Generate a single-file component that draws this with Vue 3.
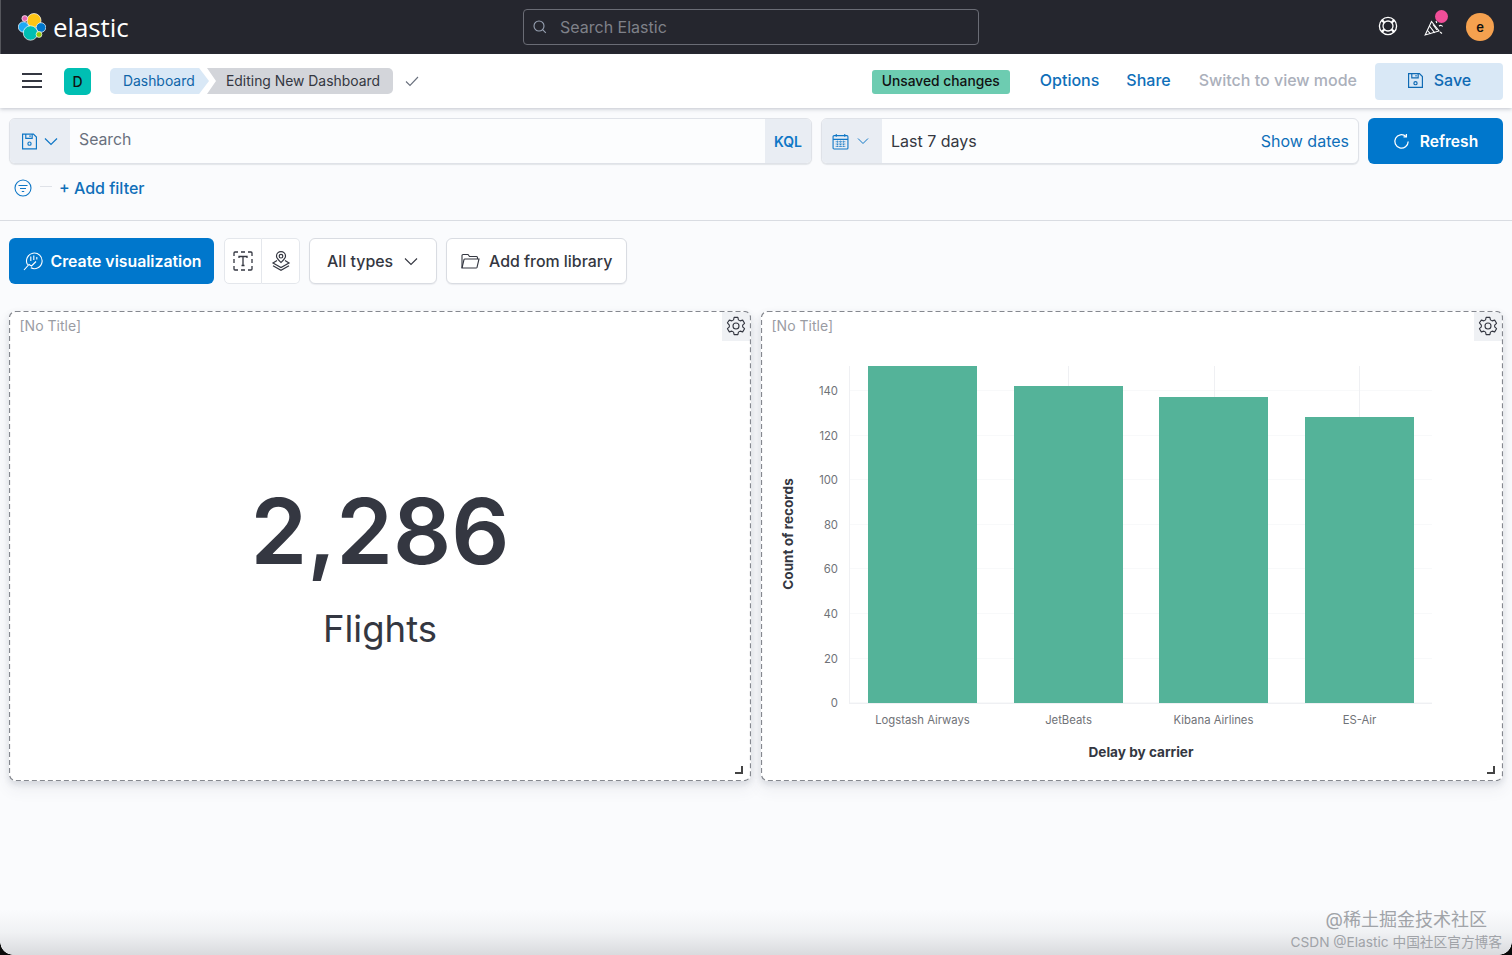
<script setup>
const bars = [
  { x: 868, y: 366, label: 'Logstash Airways' },
  { x: 1014, y: 386, label: 'JetBeats' },
  { x: 1159, y: 397, label: 'Kibana Airlines' },
  { x: 1305, y: 417, label: 'ES-Air' }
]
const ticks = [
  { v: 140, y: 390 }, { v: 120, y: 435 }, { v: 100, y: 479 }, { v: 80, y: 524 },
  { v: 60, y: 568 }, { v: 40, y: 613 }, { v: 20, y: 658 }, { v: 0, y: 702 }
]
</script>

<template>
  <div class="page">
    <header class="topbar">
      <div class="brand">
        <svg width="28" height="28" viewBox="0 0 28 28" stroke="#fff" stroke-width=".7">
          <circle cx="16" cy="7.500" r="7" fill="#fec514"/>
          <circle cx="6.800" cy="5.500" r="2.900" fill="#e66ab0"/>
          <circle cx="5.500" cy="14" r="5.200" fill="#1ba9f5"/>
          <circle cx="23" cy="14.500" r="4.800" fill="#0077cc"/>
          <circle cx="12.500" cy="20" r="7.200" fill="#00bfb3"/>
          <circle cx="21" cy="21.500" r="2.900" fill="#93c90e"/>
        </svg>
        <span class="wordmark">elastic</span>
      </div>
      <div class="global-search">
        <svg width="16" height="16" viewBox="0 0 16 16" fill="none" stroke="#98a2b3" stroke-width="1.100"><circle cx="7" cy="7" r="5"/><path d="M10.600 10.600l3.200 3.200"/></svg>
        <span>Search Elastic</span>
      </div>
      <div class="top-right">
        <svg class="help" width="20" height="20" viewBox="0 0 20 20" fill="none" stroke="#fff" stroke-width="1.300"><circle cx="10" cy="10" r="8.600"/><circle cx="10" cy="10" r="5"/><path d="M6.200 6.400L3.900 4.100M13.800 6.400l2.300-2.300M6.200 13.600l-2.300 2.300M13.800 13.600l2.300 2.300" stroke-width="2.200"/></svg>
        <div class="news">
          <svg width="20" height="20" viewBox="0 0 20 20" fill="none" stroke="#fff" stroke-width="1.100"><path d="M7.500 4.500L1.200 18 15 14z"/><path d="M5.500 9l5.200 6.800M3.500 13.500l3 3.300M9 7.500l4 5.500M12 4l.8 2M15 9c1.500-1 3-.6 3.600.5M16 15l2 1.500"/></svg>
          <span class="news-dot"></span>
        </div>
        <div class="avatar">e</div>
      </div>
    </header>

    <nav class="appbar">
      <button class="burger" aria-label="menu"><i></i><i></i><i></i></button>
      <div class="space-badge">D</div>
      <div class="crumbs">
        <span class="crumb-a">Dashboard</span>
        <span class="crumb-b">Editing New Dashboard</span>
      </div>
      <svg class="crumb-check" width="16" height="16" viewBox="0 0 16 16" fill="none" stroke="#69707d" stroke-width="1.100"><path d="M2 8.500l4 4 8-8.500"/></svg>
      <div class="grow"></div>
      <span class="unsaved">Unsaved changes</span>
      <a class="link options">Options</a>
      <a class="link share">Share</a>
      <a class="link muted">Switch to view mode</a>
      <button class="save">
        <svg width="17" height="17" viewBox="0 0 16 16" fill="none" stroke="#0f6ab4" stroke-width="1.100"><path d="M1.500 1.500h10.200l2.800 2.800v10.200h-13z"/><path d="M4.500 1.500v4h6v-4M8.500 2.800v1.500"/><circle cx="8" cy="10.500" r="1.500"/></svg>
        <span>Save</span>
      </button>
    </nav>

    <section class="query">
      <div class="query-row">
        <div class="search-group">
          <div class="prepend save-prepend">
            <svg width="17" height="17" viewBox="0 0 16 16" fill="none" stroke="#0f77c6" stroke-width="1.100"><path d="M1.500 1h10.200l2.800 2.800V15h-13z" /><path d="M4.500 1v4h6V1M8.500 2.200v1.500"/><circle cx="8" cy="10" r="1.500"/></svg>
            <svg width="14" height="14" viewBox="0 0 14 14" fill="none" stroke="#0f77c6" stroke-width="1.200"><path d="M1 4.500l6 6 6-6"/></svg>
          </div>
          <div class="search-input">Search</div>
          <div class="kql">KQL</div>
        </div>
        <div class="date-group">
          <div class="prepend date-prepend">
            <svg width="17" height="17" viewBox="0 0 16 16" fill="none" stroke="#0f77c6" stroke-width="1.050"><rect x="1" y="2.500" width="14" height="12.500" rx="1"/><path d="M1 6h14M4 1v2.500M12 1v2.500"/><path d="M3.500 8.200h9M3.500 10.400h9M3.500 12.600h9M5.200 7.200v6.400M8 7.200v6.400M10.800 7.200v6.400" stroke-width=".8" stroke-dasharray="1 .6"/></svg>
            <svg width="12" height="12" viewBox="0 0 12 12" fill="none" stroke="#0f77c6" stroke-width="1"><path d="M1 3.500l5 5 5-5"/></svg>
          </div>
          <div class="date-value">
            <span>Last 7 days</span>
            <a class="show-dates">Show dates</a>
          </div>
        </div>
        <button class="refresh">
          <svg width="17" height="17" viewBox="0 0 16 16" fill="none" stroke="#fff" stroke-width="1.200"><path d="M12.200 3.200A6.300 6.300 0 1 0 14.300 8"/><path d="M12.600.9v2.700H9.900"/></svg>
          <span>Refresh</span>
        </button>
      </div>
      <div class="filter-row">
        <svg width="18" height="18" viewBox="0 0 18 18" fill="none" stroke="#0f77c6" stroke-width="1.100"><circle cx="9" cy="9" r="8"/><path d="M4.500 6.500h9M6 9.500h6M7.800 12.500h2.400"/></svg>
        <span class="dash"></span>
        <a class="add-filter">+ Add filter</a>
      </div>
    </section>

    <section class="toolbar">
      <button class="create">
        <svg width="20" height="20" viewBox="0 0 20 20" fill="none" stroke="#fff" stroke-width="1.100"><path d="M4.600 13.800A7.800 7.800 0 1 1 7.800 16.800"/><path d="M1 19l5-5.500 2.500 1.500 4.500-4.500"/><path d="M7.800 5.500v4.500M10.800 4.500v4.500M13.800 6v2.500"/></svg>
        <span>Create visualization</span>
      </button>
      <div class="icon-group">
        <button>
          <svg width="20" height="20" viewBox="0 0 20 20" fill="none" stroke="#343741" stroke-width="1.300"><path d="M1 5V2a1 1 0 0 1 1-1h3M8 1h4M15 1h3a1 1 0 0 1 1 1v3M19 8v4M19 15v3a1 1 0 0 1-1 1h-3M12 19H8M5 19H2a1 1 0 0 1-1-1v-3M1 12V8"/><path d="M6 7V5.500h8V7M10 5.500v9M8.500 14.500h3"/></svg>
        </button>
        <button>
          <svg width="20" height="20" viewBox="0 0 20 20" fill="none" stroke="#343741" stroke-width="1.200"><path d="M10 11.500C7.500 9 5.500 7.200 5.500 5.200a4.500 4.500 0 0 1 9 0c0 2-2 3.800-4.500 6.300z"/><circle cx="10" cy="5.200" r="1.800"/><path d="M6 9.500l-4 2.500 8 4.500 8-4.500-4-2.500M2 14.800l8 4.500 8-4.500"/></svg>
        </button>
      </div>
      <button class="plain all-types">
        <span>All types</span>
        <svg width="14" height="14" viewBox="0 0 14 14" fill="none" stroke="#343741" stroke-width="1.100"><path d="M1 4.500l6 6 6-6"/></svg>
      </button>
      <button class="plain library">
        <svg width="19" height="17" viewBox="0 0 19 17" fill="none" stroke="#343741" stroke-width="1.100"><path d="M1 15V2.500a1 1 0 0 1 1-1h5l1.500 2h7a1 1 0 0 1 1 1V6"/><path d="M1 15l2-8.500a1 1 0 0 1 1-.5h14l-2 8.500a1 1 0 0 1-1 .5z"/></svg>
        <span>Add from library</span>
      </button>
    </section>

    <main class="panels">
      <article class="panel">
        <svg class="dashes" width="742" height="470"><rect x=".5" y=".5" width="741" height="469" rx="6" /></svg>
        <div class="panel-title">[No Title]</div>
        <div class="gear">
          <svg width="20" height="20" viewBox="0 0 18 18" fill="none" stroke="#343741" stroke-width="1"><path d="M7.300 1.200h3.400l.5 2.300 1.500.9 2.300-.7 1.700 2.900-1.700 1.600v1.600l1.700 1.600-1.700 2.900-2.300-.7-1.500.9-.5 2.300H7.300l-.5-2.300-1.500-.9-2.300.7-1.700-2.900L3 9.800V8.200L1.300 6.100 3 3.700l2.300.7 1.500-.9z" stroke-linejoin="round"/><circle cx="9" cy="9" r="2.700"/></svg>
        </div>
        <div class="metric">
          <div class="metric-value">2,286</div>
          <div class="metric-label">Flights</div>
        </div>
        <span class="resize"></span>
      </article>

      <article class="panel">
        <svg class="dashes" width="742" height="470"><rect x=".5" y=".5" width="741" height="469" rx="6" /></svg>
        <div class="panel-title">[No Title]</div>
        <div class="gear">
          <svg width="20" height="20" viewBox="0 0 18 18" fill="none" stroke="#343741" stroke-width="1"><path d="M7.300 1.200h3.400l.5 2.300 1.500.9 2.300-.7 1.700 2.900-1.700 1.600v1.600l1.700 1.600-1.700 2.900-2.300-.7-1.500.9-.5 2.300H7.300l-.5-2.300-1.500-.9-2.300.7-1.700-2.900L3 9.800V8.200L1.300 6.100 3 3.700l2.300.7 1.500-.9z" stroke-linejoin="round"/><circle cx="9" cy="9" r="2.700"/></svg>
        </div>
        <svg class="chart" viewBox="761 311 742 470" width="742" height="470">
          <g stroke="#f8f9fa" stroke-width="1">
            <line v-for="t in ticks" :key="t.v" x1="850" x2="1432" :y1="t.y + 0.5" :y2="t.y + 0.5" />
            <g stroke="#eff0f3">
              <line x1="1068.500" x2="1068.500" y1="366" y2="703" />
              <line x1="1214.500" x2="1214.500" y1="366" y2="703" />
              <line x1="1359.500" x2="1359.500" y1="366" y2="703" />
              <line x1="849.500" x2="849.500" y1="366" y2="703" />
              <line x1="849" x2="1432" y1="703.500" y2="703.500" />
            </g>
          </g>
          <rect v-for="b in bars" :key="b.x" :x="b.x" :y="b.y" width="109" :height="703 - b.y" fill="#54b399" />
          <text v-for="t in ticks" :key="'t' + t.v" x="838" :y="t.y + 4.500" text-anchor="end" class="tick">{{ t.v }}</text>
          <text v-for="b in bars" :key="'l' + b.x" :x="b.x + 54.500" y="723.500" text-anchor="middle" class="tick">{{ b.label }}</text>
          <text x="1141" y="757" text-anchor="middle" class="axis">Delay by carrier</text>
          <text transform="translate(793 534) rotate(-90)" text-anchor="middle" class="axis">Count of records</text>
        </svg>
        <span class="resize"></span>
      </article>
    </main>

    <div class="bottom-fade"></div>
    <div class="watermark">
      <div class="wm-a">@稀土掘金技术社区</div>
      <div class="wm-b">CSDN @Elastic 中国社区官方博客</div>
    </div>
    <div class="corner corner-r"></div>
    <div class="corner corner-l"></div>
  </div>
</template>

<style>
html, body { margin: 0; background: #fafbfd; }
</style>

<style scoped>
.page {
  position: relative;
  width: 1512px;
  height: 955px;
  overflow: hidden;
  background: #fafbfd;
  font-family: Inter, "Noto Sans CJK SC", sans-serif;
  color: #343741;
}
button { font-family: inherit; cursor: pointer; }
a { cursor: pointer; }

.topbar {
  height: 54px;
  box-sizing: border-box;
  background: #25262e;
  display: flex;
  align-items: center;
  padding: 0 18px;
  position: relative;
  border-left: 1px solid #55565c;
}
.brand { display: flex; align-items: center; gap: 8px; width: 505px; margin-left: -1px; }
.wordmark { color: #fff; font: 400 26px "Open Sans", sans-serif; line-height: 54px; letter-spacing: -0.1px; margin-left: -1px; }
.global-search {
  width: 456px;
  height: 36px;
  box-sizing: border-box;
  border: 1px solid #6a6c75;
  border-radius: 4px;
  display: flex;
  align-items: center;
  gap: 12px;
  padding-left: 8px;
  color: #7f8189;
  font-size: 16px;
}
.top-right { margin-left: auto; display: flex; align-items: center; }
.help { margin-right: 26px; margin-top: -2px; }
.news { position: relative; width: 20px; height: 20px; margin-right: 22px; margin-top: -1px; }
.news-dot { position: absolute; top: -7px; left: 11px; width: 13px; height: 13px; border-radius: 50%; background: #f04e98; }
.avatar {
  width: 28px; height: 28px; border-radius: 50%;
  background: #f5a14f; color: #111;
  display: flex; align-items: center; justify-content: center;
  font-size: 13px; font-weight: 600;
}

.appbar {
  height: 54px;
  background: #fff;
  display: flex;
  align-items: center;
  padding-left: 22px;
  padding-right: 9px;
  box-shadow: 0 1px 4px rgba(60, 70, 90, 0.3);
  position: relative;
}
.burger {
  width: 20px; height: 15px; padding: 0; border: 0; background: none;
  display: flex; flex-direction: column; justify-content: space-between;
  margin-top: -1px;
}
.burger i { display: block; height: 2px; background: #343741; }
.space-badge {
  width: 27px; height: 27px; margin-left: 22px; border-radius: 5px;
  background: #00bfb3; color: #111;
  display: flex; align-items: center; justify-content: center;
  font-size: 14px; font-weight: 500;
}
.crumbs { display: flex; height: 26px; margin-left: 19px; font-size: 13.900px; line-height: 26px; }
.crumb-a {
  width: 99px; padding-left: 13px; box-sizing: border-box;
  background: #d9e8f6; color: #0f65a8;
  border-radius: 5px 0 0 5px;
  clip-path: polygon(0 0, 90% 0, 100% 50%, 90% 100%, 0 100%);
}
.crumb-b {
  width: 186px; margin-left: -2px; padding-left: 19px; box-sizing: border-box;
  background: #d3d5da; color: #343741;
  border-radius: 0 5px 5px 0;
  clip-path: polygon(0 0, 100% 0, 100% 100%, 0 100%, 9px 50%);
}
.crumb-check { margin-left: 11px; }
.grow { flex: 1; }
.unsaved {
  background: #6dccb1; color: #111;
  width: 138px; height: 24px; line-height: 22px; text-align: center;
  border-radius: 3px; font-size: 13.800px; font-weight: 500;
  margin: 2px 30px 0 0;
}
.link { font-size: 16px; font-weight: 500; color: #0f6fb9; margin-bottom: 2px; }
.options { margin-right: 27px; }
.share { margin-right: 28px; }
.muted { color: #abb0bb; margin-right: 18px; }
.save {
  width: 128px; height: 37px;
  background: #d9e8f6; color: #0f6ab4;
  border: 0; border-radius: 4px;
  display: flex; align-items: center; justify-content: center; gap: 10px;
  font-size: 16px; font-weight: 500;
  padding: 0 0 2px;
}

.query { height: 113px; box-sizing: border-box; padding: 10px 9px 0; border-bottom: 1px solid #d9dce2; }
.query-row { display: flex; gap: 9px; height: 46px; }
.search-group, .date-group {
  display: flex; height: 46px; box-sizing: border-box;
  border: 1px solid #dfe2e8; border-radius: 6px; overflow: hidden;
  background: #fcfdfe;
  box-shadow: 0 1px 1px rgba(60, 70, 90, 0.12);
}
.search-group { width: 803px; }
.date-group { width: 538px; }
.prepend { background: #e9edf3; display: flex; align-items: center; }
.save-prepend { width: 60px; padding-left: 11px; gap: 6px; box-sizing: border-box; }
.date-prepend { width: 60px; padding-left: 10px; gap: 8px; box-sizing: border-box; }
.search-input { flex: 1; color: #69707d; font-size: 15.800px; line-height: 42px; padding-left: 9px; }
.kql {
  width: 46px; background: #e9edf3; color: #0f77c6;
  display: flex; align-items: center; justify-content: center;
  font-size: 14px; font-weight: 600;
}
.date-value { flex: 1; display: flex; align-items: center; justify-content: space-between; padding: 0 9px 0 9px; font-size: 16px; }
.show-dates { color: #0f6fb9; }
.refresh {
  flex: 1; height: 46px; border: 0; border-radius: 6px;
  background: #0077cc; color: #fff;
  display: flex; align-items: center; justify-content: center; gap: 10px;
  font-size: 15.600px; font-weight: 600;
}
.filter-row { display: flex; align-items: center; height: 20px; margin-top: 14px; padding-left: 5px; }
.dash { width: 12px; height: 1px; background: #dfe2e8; margin: 0 7px 4px 8px; }
.add-filter { color: #0f6fb9; font-size: 16px; font-weight: 500; }

.toolbar { display: flex; align-items: center; height: 46px; margin-top: 17px; padding-left: 9px; }
.create {
  width: 205px; height: 46px; border: 0; border-radius: 6px;
  background: #0077cc; color: #fff;
  display: flex; align-items: center; justify-content: center; gap: 8px;
  font-size: 15.800px; font-weight: 600;
  margin-right: 10px;
  padding: 0 0 0 1px;
}
.icon-group { display: flex; height: 46px; margin-right: 9px; }
.icon-group button {
  width: 38px; height: 46px; padding: 0; background: #fff;
  border: 1px solid #e4e7ec;
  display: flex; align-items: center; justify-content: center;
}
.icon-group button:first-child { border-radius: 5px 0 0 5px; }
.icon-group button:last-child { border-radius: 0 5px 5px 0; border-left: 0; }
.plain {
  height: 46px; box-sizing: border-box; background: #fff;
  border: 1px solid #d9dce2; border-radius: 6px; color: #343741;
  display: flex; align-items: center;
  font-size: 15.900px; font-weight: 500;
  box-shadow: 0 1px 1px rgba(60, 70, 90, 0.08);
}
.all-types { width: 128px; gap: 11px; padding: 0 0 0 17px; margin-right: 9px; }
.library { width: 181px; gap: 9px; padding: 0 0 0 14px; }

.panels { display: flex; gap: 10px; margin-top: 27px; padding: 0 9px; }
.panel {
  position: relative;
  flex: 1;
  height: 470px;
  box-sizing: border-box;
  background: #fff;
  border-radius: 6px;
  box-shadow: 0 3px 6px rgba(60, 70, 90, 0.14), 0 8px 16px rgba(60, 70, 90, 0.08);
  display: flex;
  align-items: center;
  justify-content: center;
}
.dashes { position: absolute; inset: 0; pointer-events: none; z-index: 1; }
.dashes rect { fill: none; stroke: #85888f; stroke-width: 1.200; stroke-dasharray: 5 3; }
.panel-title { position: absolute; left: 10.500px; top: 6px; font-size: 14px; color: #9a9ca3; }
.gear {
  position: absolute; right: 1px; top: 1px;
  width: 28px; height: 29px;
  padding-bottom: 2px;
  box-sizing: border-box;
  background: #eff1f4;
  display: flex; align-items: center; justify-content: center;
}
.resize {
  position: absolute; right: 8px; bottom: 7px;
  width: 6px; height: 6px;
  border-right: 2px solid #444; border-bottom: 2px solid #444;
}
.metric { text-align: center; color: #343741; margin-top: 40px; }
.metric-value { font-size: 91px; font-weight: 600; line-height: 100px; }
.metric-label { font-size: 36.500px; line-height: 46px; margin-top: 25px; }
.chart { display: block; }
.tick { font-size: 11.300px; fill: #6f7277; font-family: Inter, sans-serif; }
.axis { font-size: 13.600px; font-weight: 700; fill: #343741; font-family: Inter, sans-serif; }

.bottom-fade {
  position: absolute; left: 0; right: 0; bottom: 0; height: 45px;
  background: linear-gradient(to bottom, rgba(200,202,206,0), rgba(200,202,206,0.2) 50%, rgba(190,192,196,0.55));
}
.watermark { position: absolute; right: 10px; bottom: 3px; text-align: right; color: #a0a3a8; }
.wm-a { font-size: 18px; line-height: 24px; margin-right: 15px; }
.wm-b { font-size: 13.700px; line-height: 20px; }
.corner { position: absolute; bottom: 0; width: 13px; height: 13px; }
.corner-r { right: 0; background: radial-gradient(circle at 0 0, transparent 12.500px, #0a0a0a 13px); }
.corner-l { left: 0; background: radial-gradient(circle at 100% 0, transparent 12.500px, #0a0a0a 13px); }
</style>
